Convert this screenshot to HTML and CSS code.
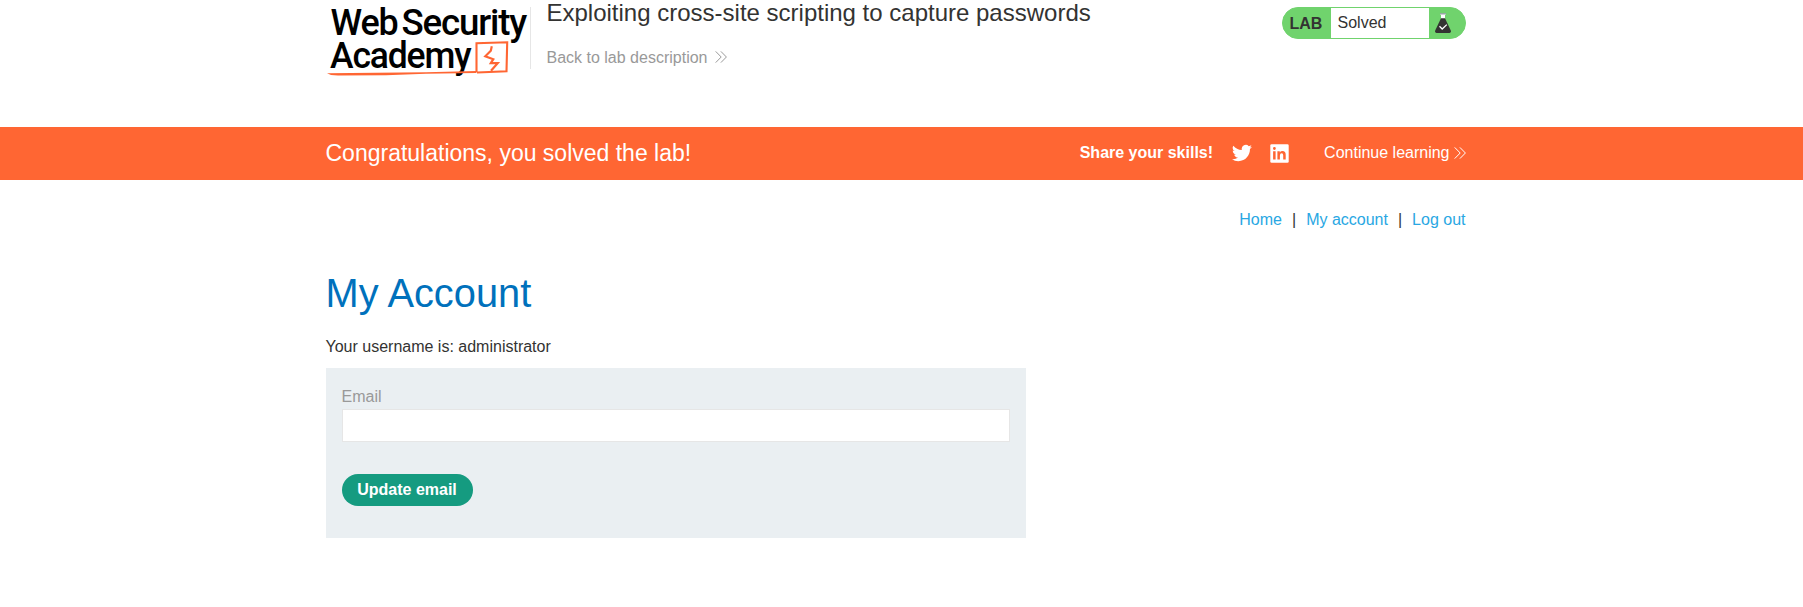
FILE: index.html
```html
<!DOCTYPE html>
<html lang="en">
<head>
<meta charset="utf-8">
<title>Exploiting cross-site scripting to capture passwords</title>
<link rel="stylesheet" href="styles.css">
</head>
<body>
<header class="lab-header">
  <div class="container header-row">
    <svg class="logo" width="204" height="84" viewBox="0 0 204 84" role="img" aria-label="Web Security Academy">
      <g class="logo-text">
        <text x="4.5" y="34.800" textLength="67" lengthAdjust="spacingAndGlyphs">Web</text>
        <text x="75.500" y="34.800" textLength="124.500" lengthAdjust="spacingAndGlyphs">Security</text>
        <text x="4" y="68.200" textLength="140.500" lengthAdjust="spacingAndGlyphs">Academy</text>
      </g>
      <g class="logo-mark">
        <path d="M1 73.2 25 72.9 100 72.200 150 71V73.1L100 73.8 60 75.3 12 75.5 5 74.9Z" fill="#ff6633"/>
        <path d="M150.500 72.500V43.200L181.200 42.3 180.500 71.3 151 72.500" fill="none" stroke="#ff6633" stroke-width="2.1"/>
        <path d="M165.800 46.300 164.800 50.700 159.300 56.200 167.300 59.200 164.800 63.200 171.700 63.200 165 70.800" fill="none" stroke="#ff6633" stroke-width="2.2"/>
      </g>
    </svg>
    <div class="title-block">
      <h2 class="lab-title">Exploiting cross-site scripting to capture passwords</h2>
      <a class="back-link">Back to lab description
        <svg class="chevrons" width="12" height="12" viewBox="0 0 12 12"><path d="M.7.4 6.2 6 .7 11.6M5.9.4 11.4 6 5.9 11.6"/></svg>
      </a>
    </div>
    <div class="status">
      <span class="status-lab">LAB</span>
      <span class="status-text">Solved</span>
      <span class="status-icon">
        <svg width="16" height="20" viewBox="0 0 16 20"><path d="M5 .3h6v1.4h-1V6H6V1.700H5Z" fill="#fff"/><path d="M5 .3h6v1.100H5Z" fill="#788"/><path d="M6 5.300h4L15.800 17.400Q16.300 19.700 14.500 20H1.500Q-.3 19.700.2 17.400Z" fill="#333332"/><path d="M4.500 13.300 7.200 16 11.800 11.600" fill="none" stroke="#fff" stroke-width="1.300"/></svg>
      </span>
    </div>
  </div>
</header>
<section class="banner">
  <div class="container banner-row">
    <h4 class="banner-title">Congratulations, you solved the lab!</h4>
    <div class="share">
      <span class="share-label">Share your skills!</span>
      <svg class="twitter" width="20" height="20" viewBox="0 0 24 24"><path d="M23.950 4.570a10 10 0 0 1-2.820.77 4.960 4.960 0 0 0 2.160-2.720c-.95.55-2 .95-3.130 1.180a4.920 4.920 0 0 0-8.380 4.480C7.690 8.090 4.070 6.130 1.640 3.160a4.920 4.920 0 0 0 1.520 6.570 4.900 4.900 0 0 1-2.230-.61v.06c0 2.380 1.700 4.370 3.950 4.820a5 5 0 0 1-2.210.09 4.940 4.940 0 0 0 4.600 3.420A9.870 9.870 0 0 1 0 19.540a14 14 0 0 0 7.550 2.210c9.050 0 14-7.500 14-13.980 0-.21 0-.42-.02-.63a9.900 9.900 0 0 0 2.420-2.570Z" fill="#fff"/></svg>
      <svg class="linkedin" width="19" height="19" viewBox="0 0 19 19"><rect x=".3" y=".3" width="18.400" height="18.400" rx="1.300" fill="#fff"/><path d="M3.100 7.300h2.500v8.300H3.100ZM3 4.500a1.400 1.400 0 1 0 2.800 0 1.400 1.400 0 1 0-2.800 0M7.400 7.300h2.400v1.200q.8-1.400 2.700-1.400 3.200 0 3.200 3.700v4.800h-2.500v-4.300q0-2-1.500-2-1.800 0-1.800 2.200v4.100H7.400Z" fill="#ff6633"/></svg>
      <a class="continue">Continue learning
        <svg class="chevrons" width="12" height="12" viewBox="0 0 12 12"><path d="M.7.4 6.2 6 .7 11.6M5.9.4 11.4 6 5.9 11.6"/></svg>
      </a>
    </div>
  </div>
</section>
<main class="container">
  <nav class="nav"><a>Home</a><span>|</span><a>My account</a><span>|</span><a>Log out</a></nav>
  <h1 class="page-title">My Account</h1>
  <p class="username">Your username is: administrator</p>
  <form class="login-form">
    <label class="field-label" for="email">Email</label>
    <input class="field" id="email" type="email">
    <button class="button" type="button">Update email</button>
  </form>
</main>
</body>
</html>
```
FILE: styles.css
```css
* { box-sizing: border-box; }
body {
  margin: 0;
  background: #fff;
  color: #333332;
  font: 16px/24px "Liberation Sans", Arial, sans-serif;
}
h1, h2, h4, p { margin: 0; font-weight: 400; }
.container { width: 1140px; margin-left: 325.5px; }
.lab-header { height: 127px; }
.header-row { display: flex; align-items: flex-start; }
.logo { flex: none; overflow: visible; }
.logo-text {
  font: 500 37.5px Roboto, sans-serif;
  letter-spacing: -1.2px;
  fill: #000;
}
.title-block {
  margin-top: 7px;
  height: 62px;
  padding-left: 16px;
  border-left: 1px solid #e6e6e6;
}
.lab-title { margin-top: -8px; font-size: 24px; line-height: 28px; }
.back-link { display: flex; align-items: center; gap: 8px; margin-top: 19px; color: #999; }
.chevrons { fill: none; stroke: currentColor; stroke-width: 1; }
.back-link .chevrons { margin-top: -2px; }
.status {
  display: flex;
  margin: 7px 0 0 auto;
  width: 184px;
  height: 32px;
  border: 1px solid #70d36d;
  border-radius: 16px;
  background: #70d36d;
  line-height: 30px;
}
.status-lab { width: 48px; padding-left: 7px; font-weight: 700; line-height: 32px; }
.status-text { width: 98px; padding-left: 7px; background: #fff; }
.status-icon { display: flex; padding: 5px 0 0 6px; }
.banner { height: 53px; background: #ff6633; color: #fff; }
.banner-row { display: flex; justify-content: space-between; align-items: center; height: 52px; }
.banner-title { font-size: 23px; line-height: 26px; }
.share { display: flex; align-items: center; }
.share-label { font-weight: 700; }
.twitter { margin-left: 19px; }
.linkedin { margin: 1px 35px 0 18px; }
.continue { display: flex; align-items: center; gap: 4px; }
.nav { display: flex; justify-content: flex-end; margin-top: 28px; color: #333332; }
.nav a { color: #29a7e3; }
.nav span { margin: 0 10px; }
.page-title { margin-top: 38px; font-size: 39.8px; line-height: 46px; color: #0071bc; }
.username { margin-top: 19px; }
.login-form {
  display: flex;
  flex-direction: column;
  align-items: flex-start;
  width: 700px;
  height: 170px;
  margin-top: 9px;
  padding: 17px 16px 16px;
  background: #eaeff2;
}
.field-label { color: #999; }
.field { width: 668px; height: 33px; margin: 0 0 32px; border: 1px solid #e6e6e6; background: #fff; }
.button {
  width: 131px;
  height: 32px;
  padding: 0;
  border: 0;
  border-radius: 16px;
  background: #159b80;
  color: #fff;
  font: 700 16px/32px "Liberation Sans", Arial, sans-serif;
}
```
